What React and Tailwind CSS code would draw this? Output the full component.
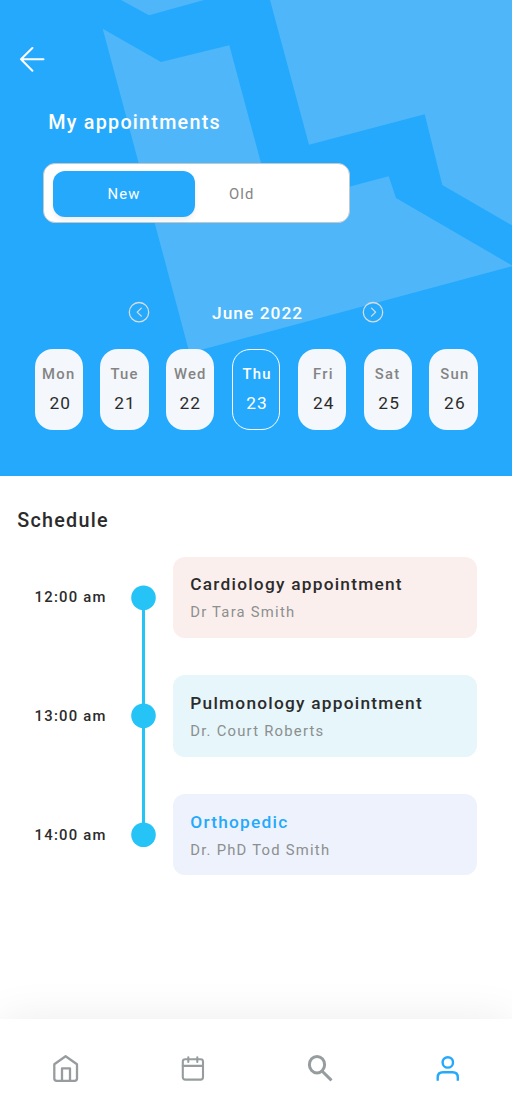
const days = [
  ['Mon', '20', 'pl-0', 'pl-[3px]'],
  ['Tue', '21', 'pl-0', 'pl-[1px]'],
  ['Wed', '22', 'pl-0', 'pl-0'],
  ['Thu', '23', 'pl-[2px]', 'pl-[2px]'],
  ['Fri', '24', 'pl-[3px]', 'pl-[4px]'],
  ['Sat', '25', 'pl-0', 'pl-[3px]'],
  ['Sun', '26', 'pl-[3px]', 'pl-[3px]'],
];

const items = [
  ['12:00 am', 'Cardiology appointment', 'Dr Tara Smith', 'bg-[#fbefed]', 'text-[#2b2b2b]'],
  ['13:00 am', 'Pulmonology appointment', 'Dr. Court Roberts', 'bg-[#e6f6fa]', 'text-[#2b2b2b]'],
  ['14:00 am', 'Orthopedic', 'Dr. PhD Tod Smith', 'bg-[#eef2fc]', 'text-[#24a9fd]'],
];

function CircleChevron({ d }) {
  return (
    <svg width="22" height="22" viewBox="0 0 22 22" fill="none" stroke="#d9dcde" strokeLinecap="round" strokeLinejoin="round">
      <circle cx="11" cy="11.2" r="9.7" strokeWidth="1.3" />
      <path d={d} strokeWidth="1.3" />
    </svg>
  );
}

function Header() {
  return (
    <header className="relative h-[476px] bg-[#24a9fd]">
      <svg className="absolute inset-0" width="512" height="476" viewBox="0 0 512 476" fill="#4fb7f9">
        <path d="M121 0L149 15.3L204 0Z" />
        <path d="M102.7 28.7L161 62L229.3 45.3L272.8 207L388.7 176.3L396 198L513 266L189.5 353Z" />
        <path d="M270 0L309 144.7L424.7 114.2L442.3 185L512 225.3V0Z" />
      </svg>
      <div className="relative flex h-full flex-col">
        <div className="flex h-[72px] items-end pl-[19px]">
          <svg width="27" height="26" viewBox="0 0 27 26" fill="none" stroke="#fff" strokeWidth="2" strokeLinecap="round" strokeLinejoin="round">
            <path d="M24.5 13.3H2M13.4 2L2 13.3L13.4 24.7" />
          </svg>
        </div>
        <h1 className="mt-[41px] pl-[48.3px] text-[19.76px] leading-[20px] font-medium tracking-[1.235px] text-white">My appointments</h1>
        <div className="mt-[30.4px] ml-[43.4px] flex h-[59.3px] w-[306.6px] rounded-[12px] border border-[#c3c8cb] bg-white pt-[6.2px] pl-[8.6px] text-[14.82px] leading-[46px] tracking-[1.1px]">
          <button className="h-[46px] w-[142px] rounded-[12px] bg-[#24a9fd] text-center leading-[47px] text-white shadow-[0_3px_5px_rgba(0,0,0,0.07)]">New</button>
          <button className="ml-[34px] h-[46px] leading-[47px] text-[#848484]">Old</button>
        </div>
        <div className="mt-[78.7px] flex h-[22px] items-center pl-[128px]">
          <CircleChevron d="M13.3 7.1L9.2 11.1L13.3 15.1" />
          <span className="ml-[62px] w-[150px] text-[17.3px] leading-[22px] font-medium tracking-[1.05px] text-white">
            <span className="relative top-px">June 2022</span>
          </span>
          <CircleChevron d="M9.5 7.1L13.6 11.1L9.5 15.1" />
        </div>
        <div className="mt-[25.3px] flex justify-between pr-[34.4px] pl-[34.6px]">
          {days.map(([d, n, dp, np]) => (
            <div
              key={n}
              className={
                'flex h-[81.6px] w-[48.3px] flex-col items-center rounded-[18px] ' +
                (d === 'Thu' ? 'border-[1.3px] border-white pt-[14px] text-white' : 'bg-[#f4f8fc] pt-[15px]')
              }
            >
              <span className={'text-[14.82px] leading-[20px] font-medium tracking-[1.235px] ' + dp + (d === 'Thu' ? '' : ' text-[#848484]')}>{d}</span>
              <span className={'mt-[9px] text-[17.3px] leading-[20px] tracking-[1.1px] ' + np + (d === 'Thu' ? '' : ' text-[#2b2b2b]')}>{n}</span>
            </div>
          ))}
        </div>
      </div>
    </header>
  );
}

function Schedule() {
  return (
    <main className="h-[543px] pt-[35px]">
      <h2 className="pl-[17.3px] text-[19.76px] leading-[20px] font-medium tracking-[1.235px] text-[#2b2b2b]">Schedule</h2>
      <div className="relative mt-[25.7px] flex flex-col gap-[37.5px] pr-[34.6px] pl-[34.6px]">
        <div className="absolute top-[40px] left-[142px] h-[238px] w-[3px] bg-[#26c4f6]" />
        {items.map(([time, title, doctor, bg, color]) => (
          <div key={time} className="flex h-[81.2px] items-center">
            <span className="w-[96.4px] text-[14.82px] leading-[20px] font-medium tracking-[1.235px] text-[#2b2b2b]">{time}</span>
            <svg className="relative" width="25" height="25" viewBox="0 0 25 25" fill="#26c4f6">
              <circle cx="12.5" cy="12.7" r="12.3" />
            </svg>
            <div className={'ml-[17.3px] h-full flex-1 rounded-[12px] pt-[17.5px] pl-[17px] ' + bg}>
              <p className={'text-[17.3px] leading-[20px] font-medium tracking-[1.24px] ' + color}>{title}</p>
              <p className="mt-[8px] text-[14.82px] leading-[20px] tracking-[1.235px] text-[#8b8f8f]">{doctor}</p>
            </div>
          </div>
        ))}
      </div>
    </main>
  );
}

function BottomNav() {
  return (
    <nav className="relative flex h-[89px] items-start bg-white pt-[34px] pl-[51px] shadow-[0_0_44px_rgba(0,0,0,0.08)]">
      <svg width="30" height="30" viewBox="0 0 30 30" fill="none" stroke="#979d9e" strokeWidth="2.3" strokeLinejoin="round">
        <path d="M3.3 11.3L14.6 3.2L26 11.3V25.5Q26 27.8 23.6 27.8H5.7Q3.3 27.8 3.3 25.5Z" />
        <path d="M11 27.8V15.4H19V27.8" />
      </svg>
      <svg className="ml-[97px]" width="30" height="30" viewBox="0 0 30 30" fill="none" stroke="#979d9e" strokeWidth="2.1" strokeLinecap="round">
        <rect x="4.8" y="6.2" width="20.2" height="20.4" rx="2.4" />
        <path d="M4.8 12.9H25M10.3 4.4V9M19.3 4.4V9" />
      </svg>
      <svg className="ml-[97px]" width="30" height="30" viewBox="0 0 30 30" fill="none" stroke="#979d9e" strokeWidth="3">
        <ellipse cx="12" cy="11.7" rx="7.6" ry="8.3" />
        <path d="M17 18L26.5 27.4" />
      </svg>
      <svg className="ml-[97px]" width="32" height="30" viewBox="0 0 32 30" fill="none" stroke="#24a9fd" strokeWidth="2.4">
        <circle cx="15.8" cy="9.4" r="5.2" />
        <path d="M5.7 27.8V24.5Q5.7 19.3 10.9 19.3H20.6Q25.8 19.3 25.8 24.5V27.8" />
      </svg>
    </nav>
  );
}

export default function App() {
  return (
    <div className="flex h-[1108px] w-[512px] flex-col overflow-hidden bg-white font-[Roboto,sans-serif]">
      <Header />
      <Schedule />
      <BottomNav />
    </div>
  );
}
